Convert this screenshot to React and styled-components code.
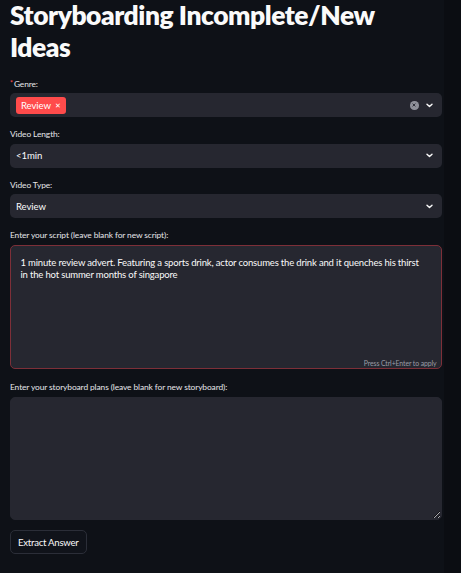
import React from "react";
import styled, { createGlobalStyle } from "styled-components";

const Global = createGlobalStyle`
  html, body { margin: 0; padding: 0; background: #0b0d12; }
  body { font-family: "Lato", "Noto Sans", sans-serif; color: #fafafa; }
  * { box-sizing: border-box; }
`;

const Page = styled.div`
  width: 444px;
  min-height: 573px;
  background: #0e1117;
  padding: 0 3px 0 10px;
  display: flex;
  flex-direction: column;
`;

const Title = styled.h1`
  margin: 0 0 13.5px 0;
  max-width: 400px;
  font-family: "Lato", sans-serif;
  font-weight: 800;
  font-size: 26.4px;
  line-height: 31.6px;
  letter-spacing: -0.45px;
  color: #fafafa;
`;

const Field = styled.div`
  display: flex;
  flex-direction: column;
  margin-bottom: ${(p) => p.$mb ?? 9.6}px;
`;

const Label = styled.label`
  display: flex;
  align-items: center;
  height: 14.4px;
  margin-bottom: 2.4px;
  font-size: 8.4px;
  letter-spacing: -0.1px;
  color: #e6e6ea;
`;

const Req = styled.span`
  color: #ff4b4b;
  margin-right: 1px;
  font-size: 7px;
  align-self: flex-start;
  margin-top: 2px;
`;

const SelectBox = styled.div`
  height: 24px;
  width: 431.5px;
  background: #262730;
  border-radius: 5px;
  display: flex;
  align-items: center;
  padding: 0 9px 0 6px;
  font-size: 9.6px;
  letter-spacing: -0.1px;
  color: #fafafa;
`;

const Value = styled.span`
  flex: 1;
`;

const Chip = styled.span`
  display: inline-flex;
  align-items: center;
  gap: 4px;
  height: 16.7px;
  padding: 0 5px 0 5px;
  background: #ff4b4b;
  border-radius: 3px;
  font-size: 9.6px;
  color: #fff;
`;

const ChipX = styled.span`
  font-size: 7px;
  line-height: 1;
`;

const Icons = styled.div`
  display: flex;
  align-items: center;
  gap: 7px;
`;

const ClearDot = styled.span`
  width: 8.5px;
  height: 8.5px;
  border-radius: 50%;
  background: #8e9099;
  display: flex;
  align-items: center;
  justify-content: center;
`;

const Chevron = () => (
  <svg width="7" height="5" viewBox="0 0 7 5">
    <path d="M1 1.2 L3.5 3.6 L6 1.2" stroke="#fafafa" strokeWidth="1.4" fill="none" strokeLinecap="round" strokeLinejoin="round" />
  </svg>
);

const AreaWrap = styled.div`
  position: relative;
  width: 431.5px;
  height: ${(p) => p.$h}px;
  background: #262730;
  border-radius: 5px;
  border: 1px solid ${(p) => (p.$focus ? "#7d2f38" : "#262730")};
`;

const Area = styled.textarea`
  width: 100%;
  height: 100%;
  resize: ${(p) => (p.$noResize ? "none" : "vertical")};
  background: transparent;
  border: none;
  outline: none;
  padding: 11px 13.5px 11px 9.5px;
  font-family: "Lato", sans-serif;
  font-size: 9.5px;
  letter-spacing: -0.17px;
  line-height: 12.4px;
  color: #fafafa;
`;

const Hint = styled.span`
  position: absolute;
  right: 4px;
  bottom: 1px;
  font-size: 6.9px;
  letter-spacing: -0.1px;
  color: #9a9ca6;
`;

const Button = styled.button`
  align-self: flex-start;
  height: 24px;
  padding: 0 7px;
  background: #10131a;
  border: 1px solid #2b2e38;
  border-radius: 5px;
  font-family: "Lato", sans-serif;
  font-size: 9.6px;
  letter-spacing: -0.25px;
  color: #fafafa;
`;

export default function App() {
  return (
    <>
      <Global />
      <Page>
        <Title>Storyboarding Incomplete/New Ideas</Title>
        <Field>
          <Label><Req>*</Req>Genre:</Label>
          <SelectBox>
            <Value>
              <Chip>Review<ChipX>✕</ChipX></Chip>
            </Value>
            <Icons>
              <ClearDot>
                <svg width="4" height="4" viewBox="0 0 4 4">
                  <path d="M0.6 0.6 L3.4 3.4 M3.4 0.6 L0.6 3.4" stroke="#262730" strokeWidth="0.9" />
                </svg>
              </ClearDot>
              <Chevron />
            </Icons>
          </SelectBox>
        </Field>
        <Field>
          <Label>Video Length:</Label>
          <SelectBox>
            <Value>&lt;1min</Value>
            <Chevron />
          </SelectBox>
        </Field>
        <Field>
          <Label>Video Type:</Label>
          <SelectBox>
            <Value>Review</Value>
            <Chevron />
          </SelectBox>
        </Field>
        <Field $mb={11.5}>
          <Label>Enter your script (leave blank for new script):</Label>
          <AreaWrap $h={124} $focus>
            <Area
              readOnly
              $noResize
              defaultValue="1 minute review advert. Featuring a sports drink, actor consumes the drink and it quenches his thirst in the hot summer months of singapore"
            />
            <Hint>Press Ctrl+Enter to apply</Hint>
          </AreaWrap>
        </Field>
        <Field $mb={10}>
          <Label>Enter your storyboard plans (leave blank for new storyboard):</Label>
          <AreaWrap $h={123.4}>
            <Area readOnly defaultValue="" />
          </AreaWrap>
        </Field>
        <Button>Extract Answer</Button>
      </Page>
    </>
  );
}
